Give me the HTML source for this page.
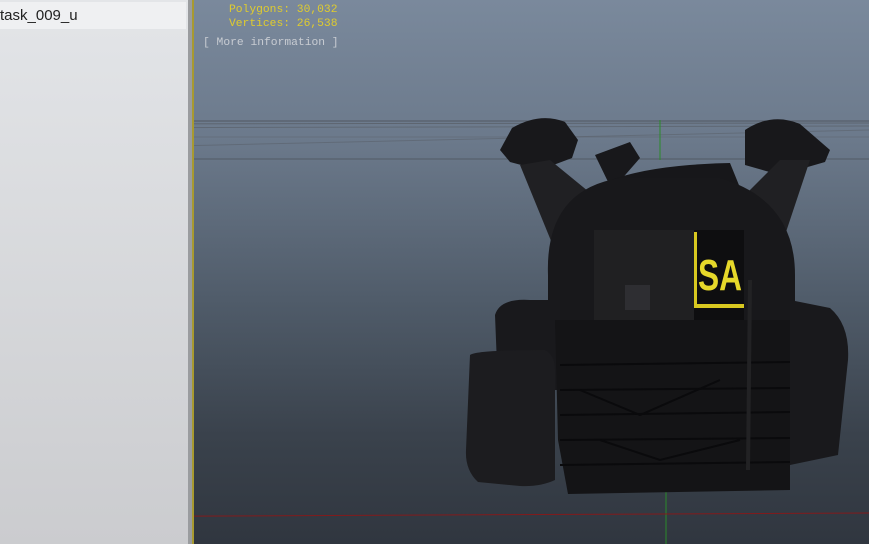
<!DOCTYPE html>
<html><head><meta charset="utf-8"><style>
html,body{margin:0;padding:0;width:869px;height:544px;overflow:hidden;}
body{position:relative;background:linear-gradient(#7a899c 0%,#6c7a8c 25%,#505c6a 55%,#3a424c 80%,#30363f 100%);font-family:"Liberation Sans",sans-serif;}
#left{position:absolute;left:0;top:0;width:188px;height:544px;background:linear-gradient(#e3e5e8,#cbcccf);}
#strip{position:absolute;left:188px;top:0;width:4px;height:544px;background:#9a9c9f;}
#yl{position:absolute;left:192px;top:0;width:2px;height:544px;background:#a89a30;}
#item{position:absolute;left:0;top:2px;width:186px;height:27px;background:#eff0f2;font-size:15px;line-height:27px;color:#222;}
.mono{position:absolute;font-family:"Liberation Mono",monospace;font-size:11.3px;}
svg{position:absolute;left:0;top:0;}
</style></head><body>
<svg width="869" height="544">
<g stroke-width="1">
<line x1="0" y1="121" x2="869" y2="121" stroke="#44484e" opacity=".7"/>
<line x1="0" y1="124" x2="869" y2="123" stroke="#52565c" opacity=".6"/>
<line x1="0" y1="128" x2="869" y2="126" stroke="#52565c" opacity=".5"/>
<line x1="0" y1="150" x2="869" y2="130" stroke="#52565c" opacity=".4"/>
<line x1="0" y1="159" x2="869" y2="159" stroke="#44484e" opacity=".6"/>
<line x1="0" y1="137" x2="869" y2="137" stroke="#5a5e66" opacity=".4"/>
<line x1="660" y1="120" x2="660" y2="160" stroke="#2a8a2a"/>
<line x1="666" y1="490" x2="666" y2="544" stroke="#2a8a2a"/>
<line x1="0" y1="517" x2="869" y2="513" stroke="#8a1818" opacity=".9"/>
</g>
<g fill="#18181b">
<path d="M500 150 L512 128 Q540 112 565 122 L578 140 L572 158 L540 170 L510 162 Z"/>
<path d="M520 165 L550 160 L605 205 L595 255 L565 275 Z" fill="#202023"/>
<path d="M745 130 Q772 112 800 124 L830 150 L825 162 L780 175 L745 165 Z"/>
<path d="M810 160 L780 160 L730 210 L740 270 L775 265 Z" fill="#202023"/>
<path d="M595 155 L630 142 L640 158 L612 190 Z"/>
<path d="M600 185 Q640 165 730 163 L745 200 L600 200 Z" fill="#17171a"/>
<path d="M548 275 Q545 190 620 178 L720 178 Q795 200 795 275 L795 320 L548 320 Z" fill="#18181b"/>
<path d="M495 315 Q500 298 530 300 L560 300 L560 390 L498 390 Z" fill="#19191c"/>
<path d="M790 300 L830 308 Q850 325 848 360 L838 455 L790 465 Z" fill="#19191c"/>
<path d="M555 320 L790 320 L790 490 L568 494 L558 440 Z" fill="#141416"/>
<path d="M470 355 Q475 350 545 350 Q555 355 555 370 L555 480 Q540 487 520 486 L478 482 Q465 470 466 450 Z" fill="#1c1c1f"/>
</g>
<g stroke="#0a0a0c" stroke-width="2" fill="none">
<path d="M560 365 L790 362 M560 390 L790 388 M560 415 L790 412 M560 440 L790 438 M560 465 L790 462"/>
<path d="M580 390 L640 415 L720 380 M600 440 L660 460 L740 440"/>
</g>
<line x1="750" y1="280" x2="748" y2="470" stroke="#222224" stroke-width="4"/>
<rect x="594" y="230" width="100" height="90" fill="#202022"/>
<rect x="625" y="285" width="25" height="25" fill="#2e2e32"/>
<rect x="694" y="230" width="50" height="90" fill="#0e0e10"/>
<path d="M697 232 L697 304 L744 304 L744 308 L694 308 L694 232 Z" fill="#d8c820"/>
<text x="698" y="290" font-family="Liberation Sans, sans-serif" font-weight="bold" font-size="44" fill="#e6d82a" textLength="44" lengthAdjust="spacingAndGlyphs">SA</text>
</svg>
<div id="left"><div id="item">task_009_u</div></div>
<div id="strip"></div><div id="yl"></div>
<div class="mono" style="left:229px;top:4px;color:#e0cc2e;">Polygons: 30,032</div>
<div class="mono" style="left:229px;top:18px;color:#e0cc2e;">Vertices: 26,538</div>
<div class="mono" style="left:203px;top:37px;color:#c8ccd2;">[ More information ]</div>
</body></html>
